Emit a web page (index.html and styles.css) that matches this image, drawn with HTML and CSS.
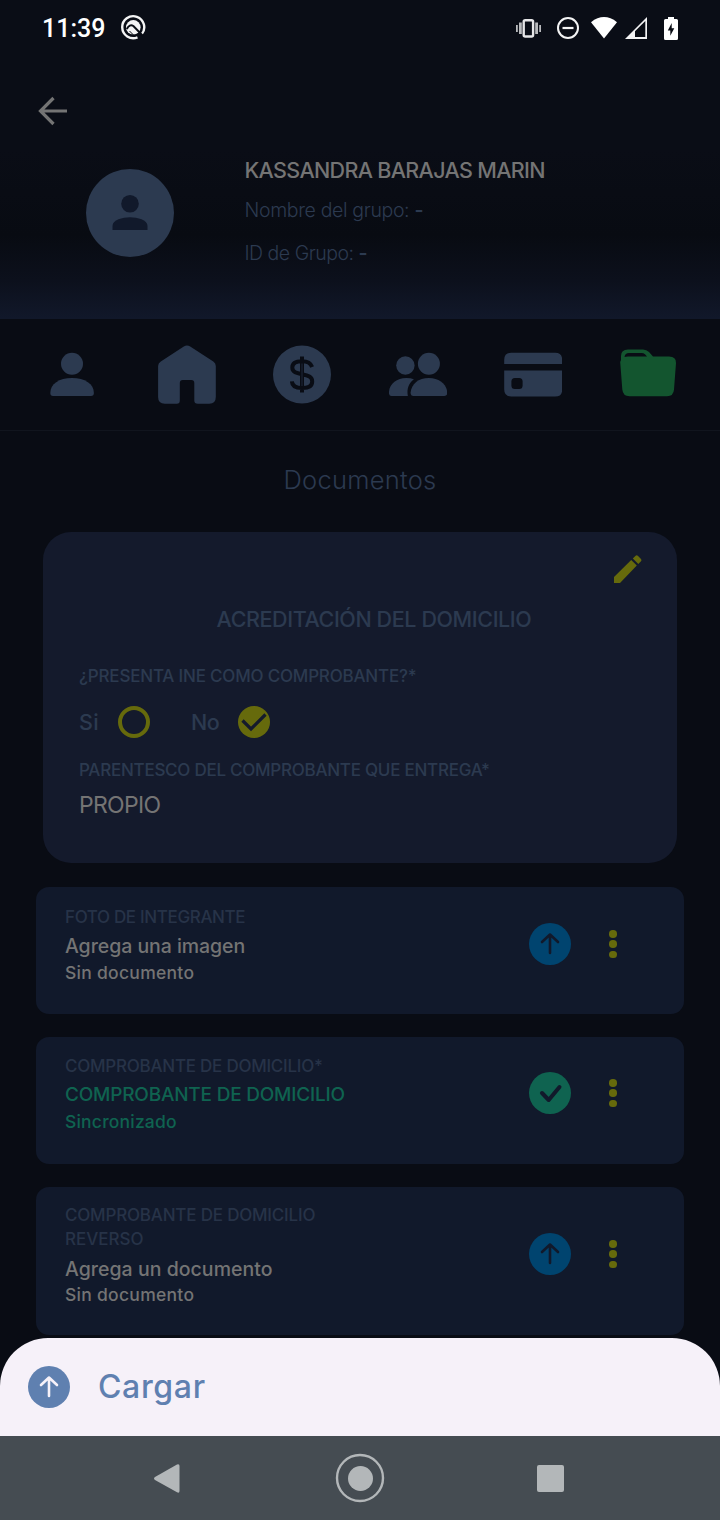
FILE: index.html
```
<!DOCTYPE html>
<html lang="es">
<head>
<meta charset="utf-8">
<title>Documentos</title>
<link rel="stylesheet" href="styles.css">
</head>
<body>
<div class="screen">
  <header class="header">
    <div class="status">
      <span class="clock">11:39</span>
      <svg class="status-app" width="26" height="26" viewBox="120 14 26 26" fill="none" stroke="#f4f4f5"><path d="M141.600 34.300A11 11 0 1 0 137.500 37.300" stroke-width="2.400"/><circle cx="133.300" cy="27.300" r="7.300" fill="#f4f4f5" stroke="none"/><path d="M126.800 29Q129.500 23.800 133.400 26L143 36" stroke="#090c14" stroke-width="2"/><path d="M129.500 31L134 35.500" stroke="#090c14" stroke-width="1"/></svg>
      <div class="status-icons">
        <svg width="26" height="20" viewBox="516 17 26 20"><g fill="#b9babd"><rect x="516" y="24" width="1.800" height="7"/><rect x="519" y="21.500" width="2.800" height="11.500"/><rect x="535.200" y="21.500" width="2.800" height="11.500"/><rect x="539.200" y="24" width="1.800" height="7"/></g><rect x="523.700" y="19.200" width="9.400" height="16.300" rx="1.500" fill="none" stroke="#e6e6e8" stroke-width="2.400"/></svg>
        <svg class="dnd" width="24" height="24" viewBox="556 16 24 24" fill="none" stroke="#f4f4f5"><circle cx="568" cy="28" r="10" stroke-width="2"/><path d="M562.500 28H573.500" stroke-width="2.200"/></svg>
        <svg class="wifi" width="27" height="24" viewBox="591 15 27 24"><path d="M591 21.200Q604 11 617 21.200L604 37.500Z" fill="#fff"/></svg>
        <svg class="signal" width="24" height="24" viewBox="624 15 24 24"><path d="M625 38L647 16V38Z" fill="#f4f4f5"/><path d="M635 36V30.300L645.300 20V36Z" fill="#090c14"/></svg>
        <svg class="battery" width="14" height="24" viewBox="664 15 14 24"><path d="M668 16H674V18H676.500Q678 18 678 19.500V37.500Q678 39 676.500 39H665.500Q664 39 664 37.500V19.500Q664 18 665.500 18H668Z" fill="#fff"/><path d="M671.700 22L667.800 29.500H670.300V34.800L674.300 27.300H671.700Z" fill="#090c14"/></svg>
      </div>
    </div>
    <div class="toolbar"><svg width="32" height="32" viewBox="36 95 32 32" fill="none" stroke="#747474" stroke-width="3.200"><path d="M67 111H41.500M53.500 98L40.500 111L53.500 124"/></svg></div>
    <div class="profile">
      <div class="avatar"><svg width="36" height="36" viewBox="111.500 195 36 36" fill="#11192b"><circle cx="129.500" cy="203.800" r="8.800"/><path d="M112 230V226C112 220 122 217.300 129.500 217.300S147 220 147 226V230Z"/></svg></div>
      <div class="profile-text">
        <div class="name">KASSANDRA BARAJAS MARIN</div>
        <div class="group">Nombre del grupo: <b>-</b></div>
        <div class="group">ID de Grupo: <b>-</b></div>
      </div>
    </div>
  </header>
  <nav class="tabs">
    <svg class="tab" width="58" height="60" viewBox="43 345 58 60"><circle cx="72" cy="363.800" r="11"/><path d="M53 396Q50.300 396 50.300 393C50.300 384 59 378 72 378S93.900 384 93.900 393Q93.900 396 91 396Z"/></svg>
    <svg class="tab" width="58" height="60" viewBox="158.200 345 58 60"><path d="M184 346.500Q187.200 344.300 190.400 346.500L213.500 361.500Q216 363.200 216 366V397Q216 403.700 209.500 403.700H198Q194.500 403.700 194.500 400.500V383Q194.500 380 191.500 380H183Q180 380 180 383V400.500Q180 403.700 177 403.700H165Q158.300 403.700 158.300 397V366Q158.300 363.200 161 361.500Z"/></svg>
    <svg class="tab" width="58" height="60" viewBox="273.400 345 58 60"><circle cx="302.400" cy="374.500" r="29"/><path d="M302.400 356.500V392.500M312.500 367C311 362.500 307.500 361.200 302.400 361.200C296.500 361.200 292.700 363.300 292.700 367.500C292.700 372.300 297 373.200 302.400 374.300C308.500 375.500 312.600 376.500 312.600 381.500C312.600 386 308.500 388 302.400 388C296.500 388 292.500 386 292.300 381.300" fill="none" stroke="#090c14" stroke-width="4"/><path d="M302.400 363.500V386" stroke="#1b2433" stroke-width="1.200"/></svg>
    <svg class="tab" width="58" height="60" viewBox="388.600 345 58 60"><circle cx="405" cy="365.500" r="9.200"/><circle cx="428.500" cy="363.800" r="11"/><path d="M391 396Q388.500 396 388.500 392.500C389 384 396 378 406 378Q410 378 413.500 379.200C408.500 383 406 389 407.500 396Z"/><path d="M413 396Q410.200 396 410.200 392.500C411 384 418 378 428.500 378S446 384 447 392.500Q447 396 444 396Z"/></svg>
    <svg class="tab" width="58" height="60" viewBox="503.800 345 58 60"><path d="M504 364V360Q504 352.800 511 352.800H555Q562 352.800 562 360V364ZM504 370.500H562V389.500Q562 396.500 555 396.500H511Q504 396.500 504 389.500Z"/><rect x="511.200" y="378" width="11.200" height="11" rx="3.500" fill="#090c14"/></svg>
    <svg class="tab tab-active" width="58" height="60" viewBox="619 345 58 60"><path fill-rule="evenodd" d="M621 360V356Q621 349.500 628 349.500H643Q646.500 349.500 649 352L653 356.500H669Q676.300 356.500 676 363L674 389.500Q673.500 396.300 667 396.300H629.500Q623 396.300 622.300 389.500L620.200 362ZM624.500 357Q626 356.500 628 356.500H647L645 354.300Q643.500 353 641.500 353H629Q625 353 624.500 357Z"/></svg>
  </nav>
  <main class="content">
    <h1 class="title">Documentos</h1>
    <section class="card">
      <div class="card-edit"><svg width="30" height="30" viewBox="613 554 30 30" fill="#666a0c"><path d="M614 583V577L631.200 560L636.800 565.600L620 583ZM632.800 558.500L635.600 555.700Q636.700 554.800 637.800 555.700L641 559Q642 560.200 641 561.300L638.300 564Z"/></svg></div>
      <h2 class="card-title">ACREDITACIÓN DEL DOMICILIO</h2>
      <div class="label">¿PRESENTA INE COMO COMPROBANTE?*</div>
      <div class="options">
        <span class="opt">Si</span><i class="radio"></i>
        <span class="opt opt-no">No</span>
        <svg width="32" height="32" viewBox="238 706 32 32"><circle cx="254" cy="722" r="16" fill="#666a0c"/><path d="M242.500 720.500L251 729L265.500 714.500" fill="none" stroke="#141a2c" stroke-width="3.200"/></svg>
      </div>
      <div class="label label-kin">PARENTESCO DEL COMPROBANTE QUE ENTREGA*</div>
      <div class="value">PROPIO</div>
    </section>
    <article class="doc">
      <div class="doc-text"><div class="doc-label">FOTO DE INTEGRANTE</div><div class="doc-name">Agrega una imagen</div><div class="doc-state">Sin documento</div></div>
      <svg class="badge" width="42" height="42" viewBox="0 0 42 42"><circle cx="21" cy="21" r="21"/><path d="M21 30V12M13 19L21 11.500L29 19"/></svg>
      <div class="more"><i></i><i></i><i></i></div>
    </article>
    <article class="doc doc-synced">
      <div class="doc-text"><div class="doc-label">COMPROBANTE DE DOMICILIO*</div><div class="doc-name">COMPROBANTE DE DOMICILIO</div><div class="doc-state">Sincronizado</div></div>
      <svg class="badge" width="42" height="42" viewBox="0 0 42 42"><circle cx="21" cy="21" r="21"/><path class="check" d="M13 21L19.700 28L30.500 15"/></svg>
      <div class="more"><i></i><i></i><i></i></div>
    </article>
    <article class="doc doc-tall">
      <div class="doc-text"><div class="doc-label">COMPROBANTE DE DOMICILIO<br><span class="doc-back">REVERSO</span></div><div class="doc-name">Agrega un documento</div><div class="doc-state">Sin documento</div></div>
      <svg class="badge" width="42" height="42" viewBox="0 0 42 42"><circle cx="21" cy="21" r="21"/><path d="M21 30V12M13 19L21 11.500L29 19"/></svg>
      <div class="more"><i></i><i></i><i></i></div>
    </article>
  </main>
  <div class="sheet">
    <svg class="badge" width="42" height="42" viewBox="0 0 42 42"><circle cx="21" cy="21" r="21"/><path d="M21 30V12M13 19L21 11.500L29 19"/></svg>
    <span class="sheet-text">Cargar</span>
  </div>
  <footer class="sysnav">
    <svg width="720" height="84" viewBox="0 1436 720 84" fill="#b3b7b9"><path d="M155 1477L177 1464.500Q179.500 1463.500 179.500 1466V1491Q179.500 1493.500 177 1492.300L155 1480Q153 1478.500 155 1477Z"/><circle cx="360.500" cy="1478.500" r="12.500"/><circle cx="360" cy="1478" r="23" fill="none" stroke="#b3b7b9" stroke-width="2.400"/><rect x="537" y="1465" width="27" height="27" rx="2"/></svg>
  </footer>
</div>
</body>
</html>
```
FILE: styles.css
```
* { box-sizing: border-box; }
body { margin: 0; background: #090c14; font-family: Inter, "Open Sans", sans-serif; font-weight: 500; }
svg { display: block; flex: none; }
.screen { width: 720px; height: 1520px; overflow: hidden; display: flex; flex-direction: column; color: #2c3a50; white-space: nowrap; }
.header { height: 319px; flex: none; background: linear-gradient(#0a0d16 0, #0a0d16 150px, #080b12 235px, #0c101c 280px, #11182a 318px); }
.status { height: 56px; display: flex; align-items: center; padding-left: 42px; }
.clock { font: 500 25px/56px Roboto, sans-serif; color: #fff; width: 78px; padding-top: 1px; }
.status-app { margin-top: -2px; }
.status-icons { display: flex; align-items: center; margin-left: 370px; height: 54px; }
.dnd { margin: 0 11px 0 14px; }
.wifi { margin-right: 6px; }
.battery { margin-left: 16px; }
.toolbar { height: 84px; padding: 39px 0 0 36px; }
.profile { display: flex; align-items: flex-start; padding-left: 85.500px; }
.avatar { width: 88px; height: 88px; margin-top: 29px; border-radius: 50%; background: #2c3a50; display: flex; align-items: center; justify-content: center; }
.profile-text { padding: 14px 0 0 71px; }
.name { font-size: 21.500px; line-height: 32px; color: #747474; margin-bottom: 3px; letter-spacing: -0.670px; }
.group { font-size: 19.500px; line-height: 43px; font-weight: 300; letter-spacing: -0.350px; }
.group + .group { letter-spacing: -0.500px; }
.group b { font-weight: 600; }
.tabs { height: 112px; flex: none; padding: 0 14.400px; display: grid; grid-template-columns: repeat(6, 1fr); justify-items: center; align-items: center; border-bottom: 1px solid #11151e; }
.tab { fill: #2c3a50; }
.tab-active { fill: #13552f; }
.content { height: 907px; flex: none; display: flex; flex-direction: column; align-items: center; overflow: hidden; }
.title { margin: 0; font-size: 25.500px; line-height: 97px; height: 101px; font-weight: 300; flex: none; letter-spacing: 0.250px; }
.card { width: 634px; height: 331px; flex: none; margin-bottom: 24px; padding: 0 36px; border-radius: 28px; background: #141a2c; }
.card-edit { padding: 22px 0 0 534px; height: 67px; }
.card-title { margin: 0 0 22px 28px; font-size: 21.500px; line-height: 40px; font-weight: 500; text-align: center; letter-spacing: -0.400px; }
.label { font-size: 17px; line-height: 30px; letter-spacing: -0.190px; }
.label-kin { letter-spacing: -0.250px; }
.options { display: flex; align-items: center; height: 32px; margin: 15px 0 17px; font-size: 21.500px; }
.opt { width: 39px; letter-spacing: 0.300px; }
.opt-no { width: 47px; margin-left: 41px; letter-spacing: -0.400px; }
.radio { width: 32px; height: 32px; border: 4px solid #666a0c; border-radius: 50%; }
.value { font-size: 23px; line-height: 41px; font-weight: 400; color: #747474; letter-spacing: -0.700px; }
.doc { width: 648px; height: 127px; flex: none; margin-bottom: 23px; padding-left: 29px; display: flex; border-radius: 13px; background: #11192b; }
.doc-tall { height: 148px; }
.doc-text { width: 464px; padding-top: 18px; }
.doc-label { font-size: 17px; line-height: 24px; color: #273348; letter-spacing: -0.350px; }
.doc-name { font-size: 19.500px; line-height: 32px; color: #747474; letter-spacing: -0.050px; padding-top: 1px; }
.doc-state { font-size: 17.500px; line-height: 24px; color: #747474; letter-spacing: 0.280px; margin-top: -1px; }
.doc-synced .doc-text, .doc-tall .doc-text { padding-top: 17px; }
.doc-synced .doc-label { letter-spacing: -0.240px; }
.doc-synced .doc-name { font-size: 19px; letter-spacing: -0.210px; }
.doc-synced .doc-state { letter-spacing: 0.200px; }
.doc-synced .doc-name, .doc-synced .doc-state { color: #0f6350; }
.doc-tall .doc-label { letter-spacing: -0.190px; margin-top: -1px; }
.doc-tall .doc-name { letter-spacing: 0.030px; padding-top: 2px; }
.doc-tall .doc-state { margin-top: -2px; }
.doc-tall .doc-back { letter-spacing: 0; }
.badge circle { fill: #00446f; }
.badge path { fill: none; stroke: #11192b; stroke-width: 2.600; stroke-linecap: round; stroke-linejoin: round; }
.badge .check { stroke-width: 4; }
.doc .badge { margin-top: 36px; }
.doc-synced .badge { margin-top: 35px; }
.doc-synced .badge circle { fill: #0f6350; }
.more { width: 8px; height: 28px; margin: 43px 0 0 38px; display: flex; flex-direction: column; justify-content: space-between; }
.more i { width: 7.500px; height: 7.500px; border-radius: 50%; background: #666a0c; }
.doc-synced .more { margin-top: 42px; }
.doc.doc-synced .badge { margin-top: 35px; }
.doc-tall .badge { margin-top: 46px; }
.doc-tall .more { margin-top: 53px; }
.sheet { height: 98px; flex: none; display: flex; align-items: center; gap: 28px; padding-left: 28px; background: #f6f1f9; border-radius: 48px 48px 0 0; color: #5f80b0; font-size: 32px; }
.sheet-text { letter-spacing: 0.650px; padding-bottom: 2px; }
.sheet .badge circle { fill: #5f80b0; }
.sheet .badge path { stroke: #f6f1f9; }
.sysnav { height: 84px; flex: none; background: #454c52; }
```
